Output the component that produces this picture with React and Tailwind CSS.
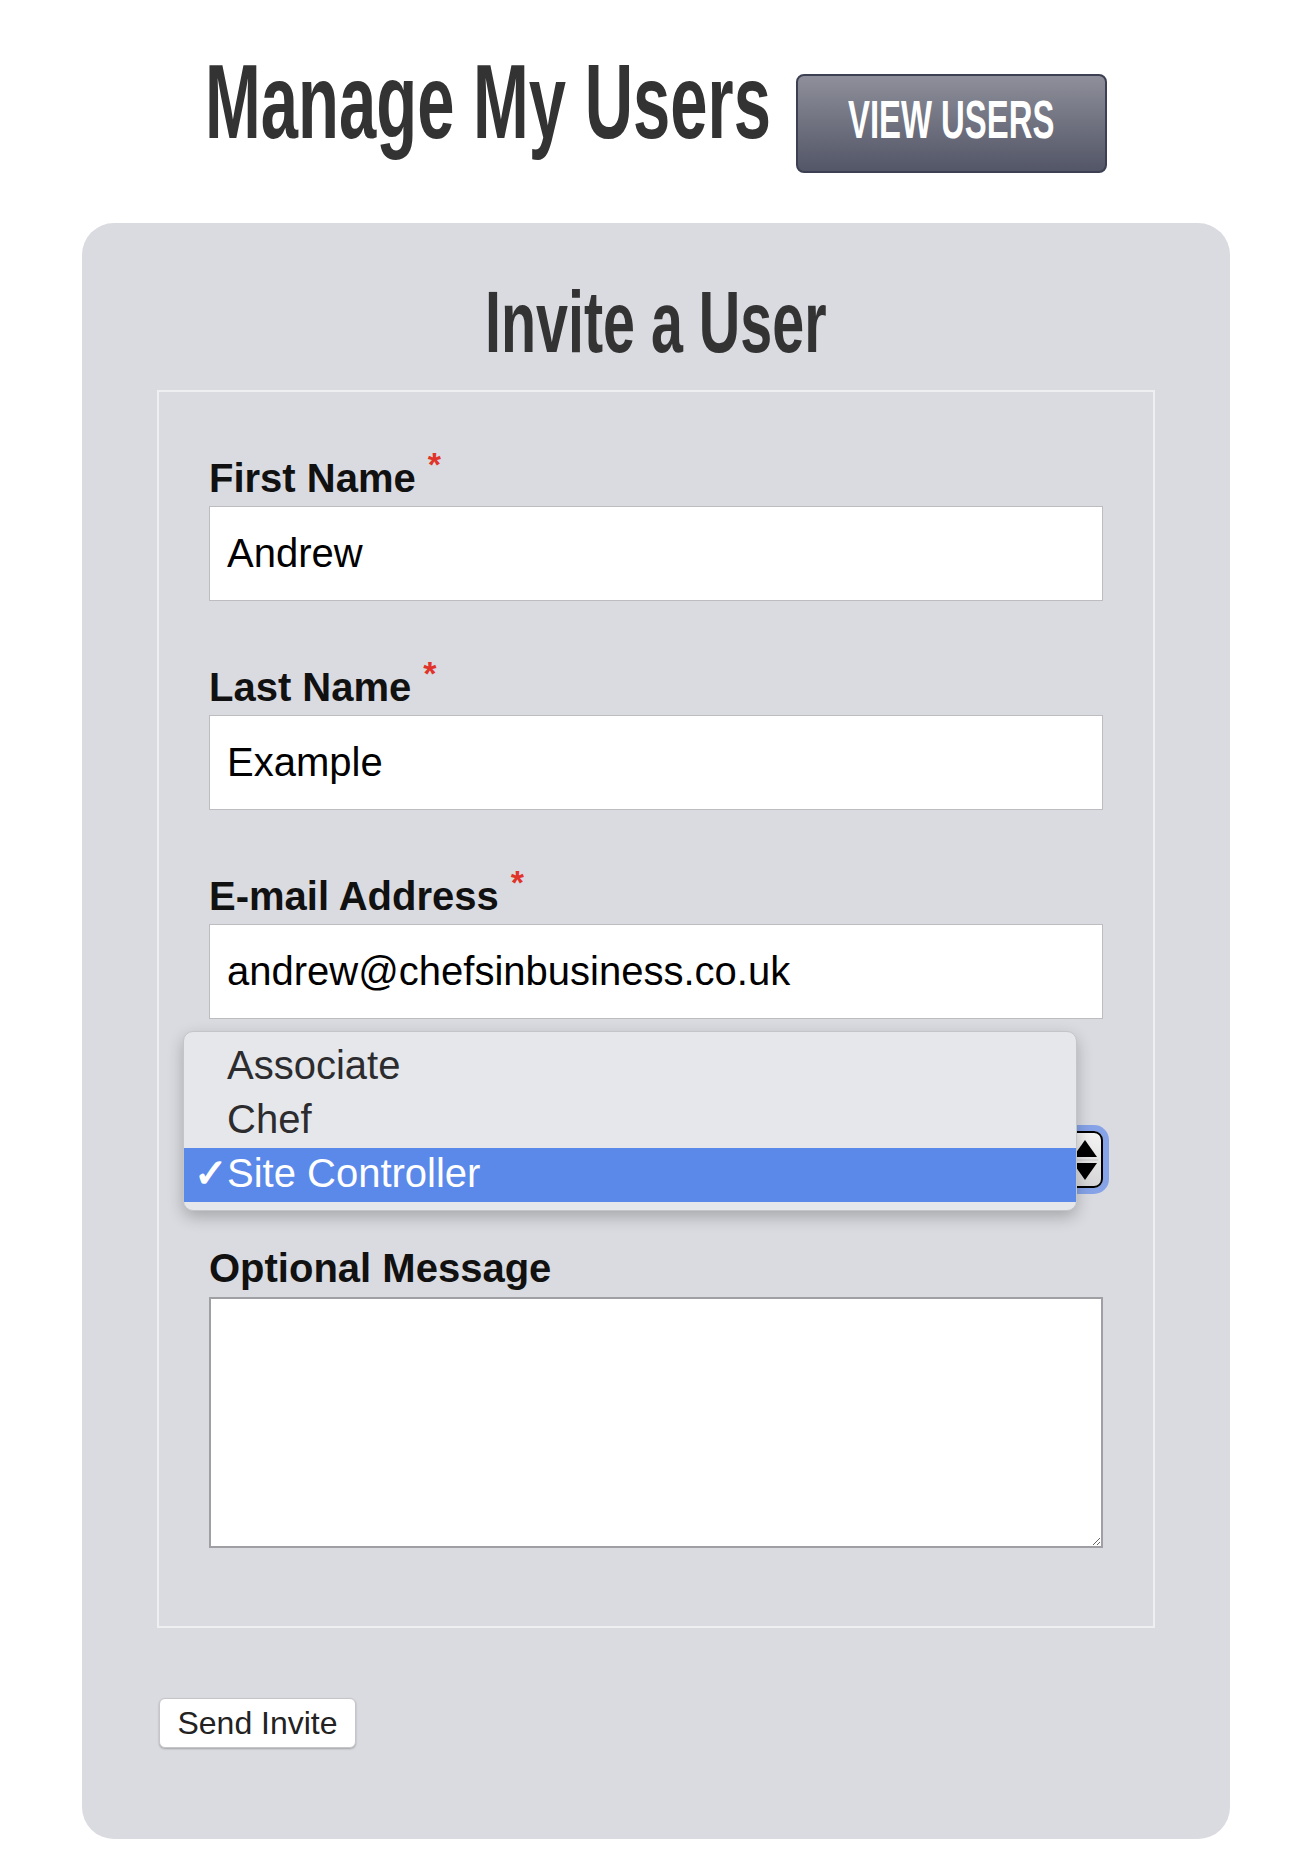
import React from 'react';

const fields = [
  { label: 'First Name', value: 'Andrew' },
  { label: 'Last Name', value: 'Example' },
  { label: 'E-mail Address', value: 'andrew@chefsinbusiness.co.uk' },
];

const roles = ['Associate', 'Chef', 'Site Controller'];

function Label({ children, required, className = '' }) {
  return (
    <label className={`block h-[46px] text-[40px] leading-[46px] font-bold text-[#111] ${className}`}>
      {children}
      {required && (
        <span className="relative -top-[16px] ml-[12px] text-[34px] font-bold text-[#e0342a]">*</span>
      )}
    </label>
  );
}

export default function App() {
  return (
    <div className="min-h-screen bg-white pb-[36px] font-['Liberation_Sans',Arial,sans-serif]">
      {/* Page header: condensed display type */}
      <header className="flex items-start justify-center gap-[22px] pt-[49px]">
        <h1 className="h-[105px] w-[569px] origin-left scale-x-[0.638] whitespace-nowrap text-[105px] leading-[105px] font-bold text-[#333]">
          Manage My Users
        </h1>
        <button className="mt-[25px] flex h-[99px] w-[311px] items-start justify-center rounded-[8px] border-2 border-[#3d4052] bg-gradient-to-b from-[#8e8f9a] to-[#535667] pt-[17px]">
          <span className="block h-[53px] w-[207px] origin-left scale-x-[0.62] whitespace-nowrap text-left text-[53px] leading-[53px] font-bold text-white">
            VIEW USERS
          </span>
        </button>
      </header>

      {/* Invite panel */}
      <section className="mx-[82px] mt-[50px] rounded-[32px] bg-[#dadbe0] px-[75px] pt-[55px] pb-[91px]">
        <h2 className="mx-auto h-[87px] w-[342px] origin-left scale-x-[0.66] whitespace-nowrap text-[87px] leading-[87px] font-bold text-[#333]">
          Invite a User
        </h2>

        <div className="mt-[25px] border-2 border-[#eeeff1] px-[50px] pt-[63px] pb-[78px]">
          {fields.map((f, i) => (
            <div key={f.label} className={i > 0 ? 'mt-[63px]' : ''}>
              <Label required>{f.label}</Label>
              <input
                type="text"
                defaultValue={f.value}
                className="mt-[5px] block h-[95px] w-full border border-[#bdbdc0] bg-white px-[17px] text-[40px] text-black outline-none"
              />
            </div>
          ))}

          {/* Role select, shown open */}
          <div className="relative mt-[63px]">
            <Label required>User Role</Label>
            <div className="mt-[3px] flex h-[57px] w-full items-center justify-end rounded-[9px] border-2 border-black bg-gradient-to-b from-[#f4f4f4] to-[#d6d6d8] pr-[3px] shadow-[0_0_0_6px_#86a3e8]">
              <svg width="26" height="46" viewBox="0 0 26 46">
                <path d="M13 3 L25 20 L1 20 Z" fill="#000" />
                <line x1="0" y1="23" x2="26" y2="23" stroke="#c8c8c8" strokeWidth="1" />
                <path d="M13 43 L25 26 L1 26 Z" fill="#000" />
              </svg>
            </div>

            <ul className="absolute -left-[26px] -top-[51px] z-10 w-[894px] rounded-[10px] border border-[#c4c5c9] bg-[#e6e7eb] py-[8px] shadow-[0_6px_16px_rgba(0,0,0,0.24)]">
              {roles.map((r) => {
                const selected = r === 'Site Controller';
                return (
                  <li
                    key={r}
                    className={`relative h-[54px] pl-[43px] text-[40px] leading-[50px] ${
                      selected ? 'bg-[#5a89ea] text-white' : 'text-[#2c2c2f]'
                    }`}
                  >
                    {selected && <span className="absolute left-[10px] top-0 text-[40px] font-bold">✓</span>}
                    {r}
                  </li>
                );
              })}
            </ul>
          </div>

          <div className="mt-[57px]">
            <Label>Optional Message</Label>
            <textarea className="mt-[6px] block h-[251px] w-full border-2 border-[#a0a0a4] bg-white px-[17px] py-[10px] text-[40px] outline-none" />
          </div>
        </div>

        <button className="mt-[70px] ml-[2px] h-[50px] w-[197px] rounded-[6px] border border-[#c6c6c9] bg-white text-[32px] leading-[48px] text-[#222] shadow-[0_1px_2px_rgba(0,0,0,0.25)]">
          Send Invite
        </button>
      </section>
    </div>
  );
}
